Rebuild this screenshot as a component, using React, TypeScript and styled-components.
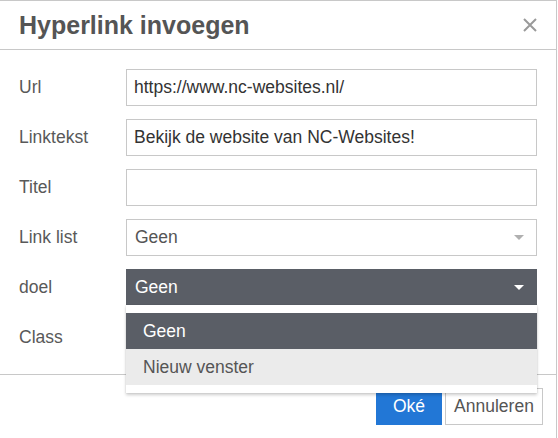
import React from "react";
import styled, { createGlobalStyle } from "styled-components";

const Global = createGlobalStyle`
  html, body { margin: 0; padding: 0; background: #fff; overflow: hidden; }
  body { font-family: "Liberation Sans", Arial, sans-serif; }
  * { box-sizing: border-box; }
`;

const Dialog = styled.div`
  position: relative;
  width: 557px;
  border-top: 1px solid #c8c8c8;
  border-right: 1px solid #c8c8c8;
  background: #fff;
`;

const Header = styled.div`
  height: 49px;
  display: flex;
  align-items: center;
  justify-content: space-between;
  padding: 0 18px 0 19px;
  border-bottom: 1px solid #c8c8c8;
`;

const Title = styled.h1`
  margin: 0;
  font-size: 25px;
  font-weight: bold;
  color: #555;
`;

const Close = styled.button`
  border: 0;
  background: none;
  padding: 0;
  width: 16px;
  height: 16px;
  display: flex;
  cursor: pointer;
`;

const Body = styled.div`
  position: relative;
  padding: 19px;
  display: flex;
  flex-direction: column;
  gap: 14px;
  border-bottom: 1px solid #c8c8c8;
`;

const Row = styled.div`
  display: grid;
  grid-template-columns: 107px 411px;
  align-items: center;
  height: 36px;
`;

const Label = styled.label`
  font-size: 17.5px;
  color: #595959;
`;

const Input = styled.div`
  height: 37px;
  border: 1px solid #c8c8c8;
  padding: 0 7px;
  display: flex;
  align-items: center;
  font-size: 17.5px;
  color: #333;
  background: #fff;
`;

const Select = styled.div<{ $dark?: boolean }>`
  height: 37px;
  border: 1px solid ${(p) => (p.$dark ? "#5a5e66" : "#c8c8c8")};
  background: ${(p) => (p.$dark ? "#5a5e66" : "#fff")};
  color: ${(p) => (p.$dark ? "#fff" : "#555")};
  padding: 0 12px 0 8px;
  display: flex;
  align-items: center;
  justify-content: space-between;
  font-size: 17.5px;
`;

const Arrow = styled.span<{ $dark?: boolean }>`
  width: 0;
  height: 0;
  border-left: 5px solid transparent;
  border-right: 5px solid transparent;
  border-top: 5px solid ${(p) => (p.$dark ? "#fff" : "#b0b0b0")};
`;

const Menu = styled.ul`
  position: absolute;
  top: 255px;
  left: 126px;
  width: 411px;
  margin: 0;
  padding: 8px 0;
  list-style: none;
  background: #fff;
  box-shadow: 0 2px 3px rgba(0, 0, 0, 0.2), 0 0 1px rgba(0, 0, 0, 0.15);
  z-index: 2;
`;

const Item = styled.li<{ $active?: boolean; $hover?: boolean }>`
  height: 36px;
  display: flex;
  align-items: center;
  padding-left: 17px;
  font-size: 17.5px;
  background: ${(p) => (p.$active ? "#5a5e66" : p.$hover ? "#ebebeb" : "#fff")};
  color: ${(p) => (p.$active ? "#fff" : "#555")};
`;

const Footer = styled.div`
  display: flex;
  justify-content: flex-end;
  gap: 3px;
  padding: 13px 13px 20px 0;
`;

const Button = styled.button<{ $primary?: boolean }>`
  height: 37px;
  padding: 0 ${(p) => (p.$primary ? "16px" : "8px")};
  min-width: ${(p) => (p.$primary ? "65px" : "98px")};
  font-family: "Liberation Sans", Arial, sans-serif;
  font-size: 17.5px;
  border: 1px solid ${(p) => (p.$primary ? "#2277d6" : "#c8c8c8")};
  background: ${(p) => (p.$primary ? "#2277d6" : "#fff")};
  color: ${(p) => (p.$primary ? "#fff" : "#555")};
  cursor: pointer;
`;

export default function App() {
  return (
    <>
      <Global />
      <Dialog>
        <Header>
          <Title>Hyperlink invoegen</Title>
          <Close aria-label="Sluiten">
            <svg width="16" height="16" viewBox="0 0 16 16">
              <path d="M2 2 L14 14 M14 2 L2 14" stroke="#9a9a9a" strokeWidth="2" />
            </svg>
          </Close>
        </Header>
        <Body>
          <Row>
            <Label>Url</Label>
            <Input>https://www.nc-websites.nl/</Input>
          </Row>
          <Row>
            <Label>Linktekst</Label>
            <Input>Bekijk de website van NC-Websites!</Input>
          </Row>
          <Row>
            <Label>Titel</Label>
            <Input />
          </Row>
          <Row>
            <Label>Link list</Label>
            <Select>
              Geen
              <Arrow />
            </Select>
          </Row>
          <Row>
            <Label>doel</Label>
            <Select $dark>
              Geen
              <Arrow $dark />
            </Select>
          </Row>
          <Row>
            <Label>Class</Label>
            <Input />
          </Row>
          <Menu>
            <Item $active>Geen</Item>
            <Item $hover>Nieuw venster</Item>
          </Menu>
        </Body>
        <Footer>
          <Button $primary>Oké</Button>
          <Button>Annuleren</Button>
        </Footer>
      </Dialog>
    </>
  );
}
